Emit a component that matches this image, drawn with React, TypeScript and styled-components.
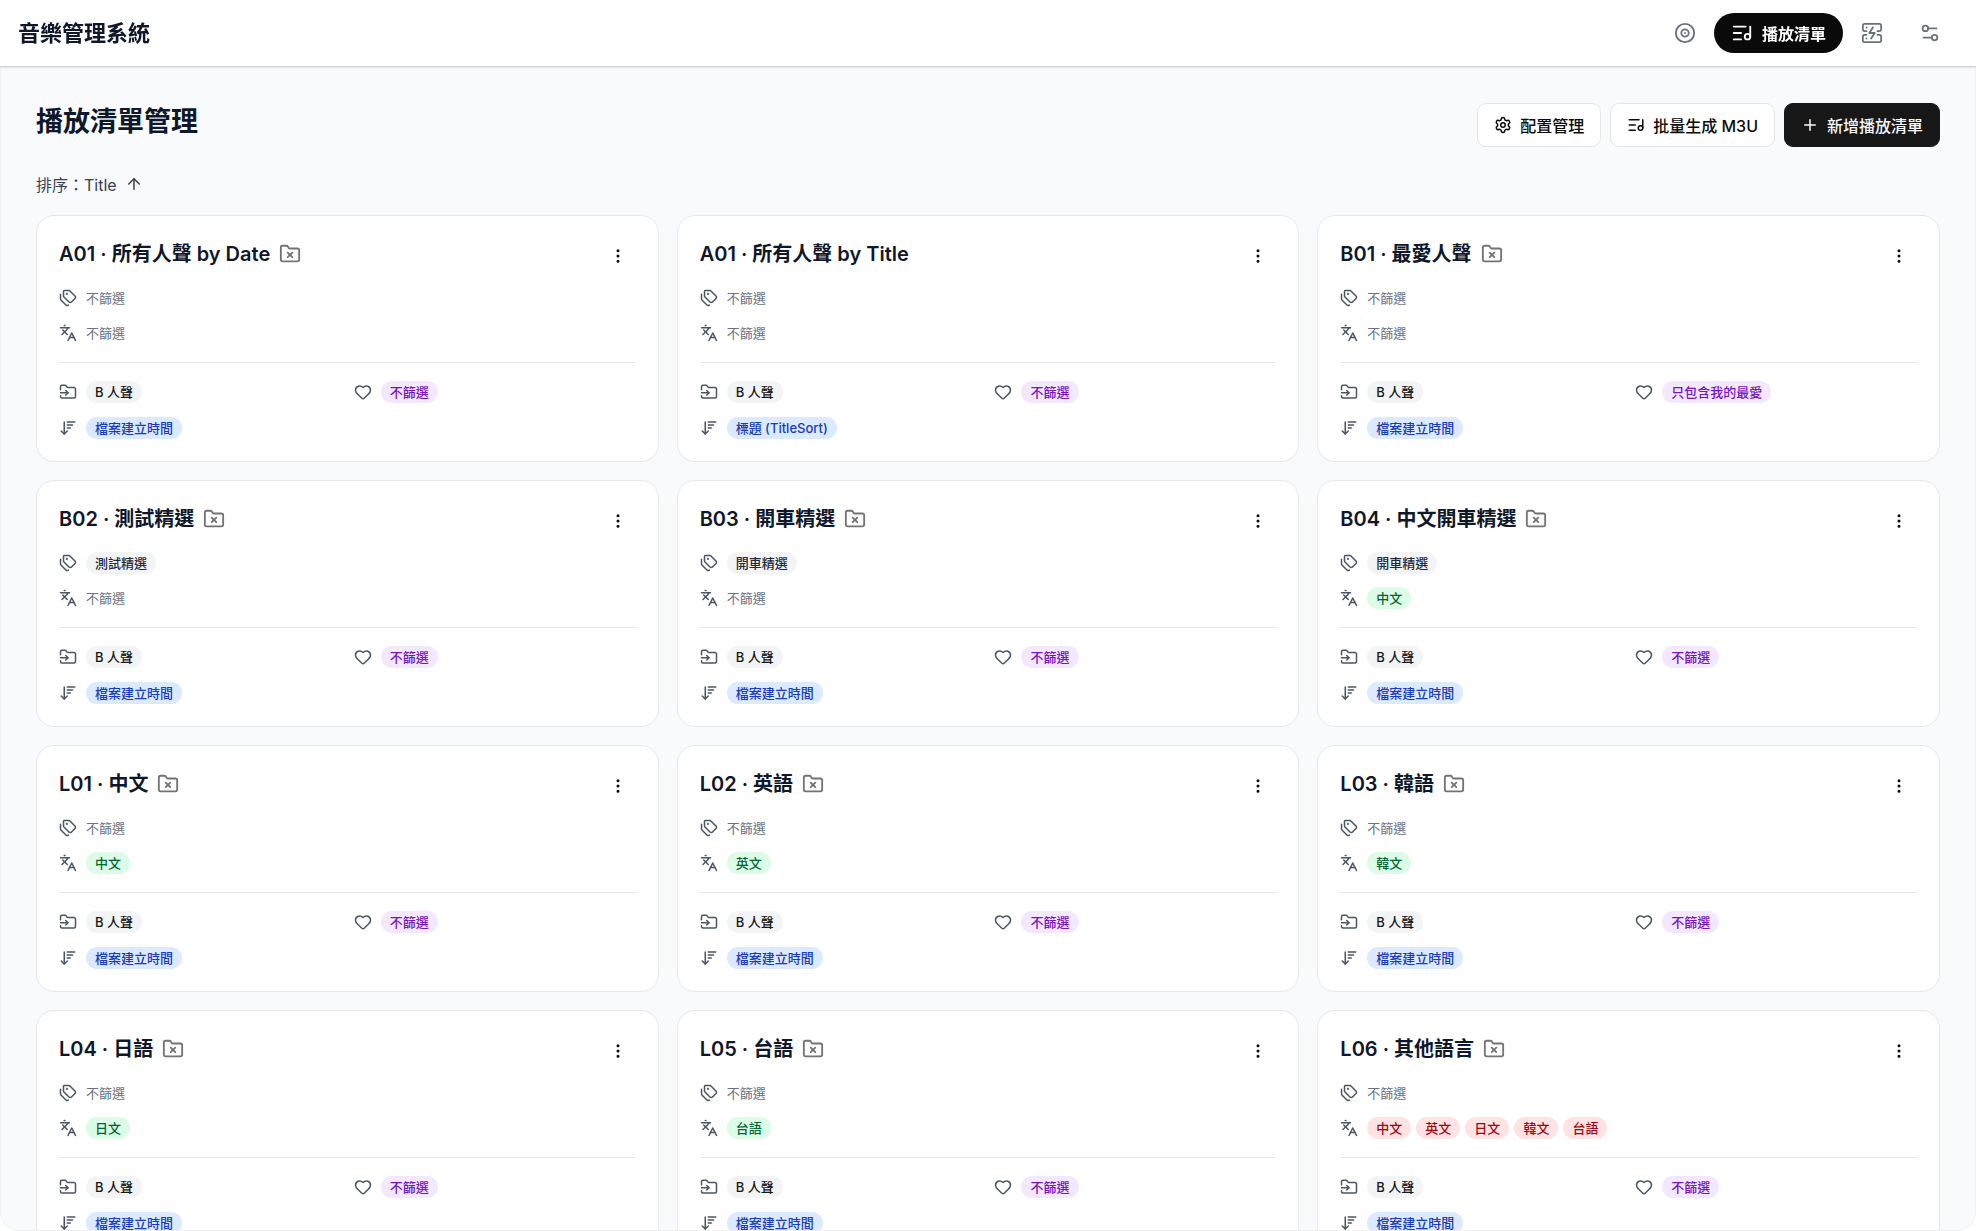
import React from "react";
import styled, { createGlobalStyle, css } from "styled-components";
import {
  ArrowDownWideNarrow,
  ArrowUp,
  Disc2,
  EllipsisVertical,
  FolderInput,
  FolderX,
  Heart,
  Languages,
  ListMusic,
  Plus,
  ServerCrash,
  Settings,
  Settings2,
  Tags,
} from "lucide-react";

const GlobalStyle = createGlobalStyle`
  *, *::before, *::after { box-sizing: border-box; }
  body {
    margin: 0;
    background: #ffffff;
    color: #0f172b;
    font-family: Inter, "Noto Sans CJK TC", sans-serif;
    font-size: 16px;
  }
  button { font: inherit; cursor: pointer; }
  svg { display: block; flex-shrink: 0; }
`;

const Shell = styled.div`
  display: flex;
  flex-direction: column;
  height: 100vh;
  background: #f9fafb;
  overflow: hidden;
`;

const WindowFrame = styled.div`
  position: fixed;
  inset: 0;
  border: 1px solid #f0f0f2;
  border-radius: 20px;
  box-shadow: 0 0 0 20px #ffffff;
  pointer-events: none;
`;

const Header = styled.header`
  display: flex;
  align-items: center;
  justify-content: space-between;
  flex-shrink: 0;
  height: 66px;
  padding: 0 17px 0 18px;
  background: #ffffff;
  box-shadow: 0 1px 3px rgba(0, 0, 0, 0.12), 0 1px 2px rgba(0, 0, 0, 0.12);
  z-index: 1;
`;

const Brand = styled.div`
  font-size: 22px;
  line-height: 32px;
  font-weight: 700;
`;

const Nav = styled.nav`
  display: flex;
`;

const NavItem = styled.a<{ $active?: boolean }>`
  display: flex;
  align-items: center;
  gap: 9px;
  height: 40px;
  padding: 0 18px;
  border-radius: 20px;
  color: #6a7282;
  font-weight: 600;
  text-decoration: none;
  ${(p) =>
    p.$active &&
    css`
      padding: 0 17px;
      background: #0a0a0a;
      color: #ffffff;
    `}
`;

const Main = styled.main`
  flex: 1;
  min-height: 0;
  padding: 37px 36px;
  overflow-y: auto;
  scrollbar-width: none;
`;

const PageHead = styled.div`
  display: flex;
  align-items: flex-start;
  justify-content: space-between;
  height: 44px;
`;

const PageTitle = styled.h1`
  margin: 0;
  font-size: 27px;
  line-height: 38px;
  font-weight: 700;
`;

const Actions = styled.div`
  display: flex;
  gap: 9px;
`;

const ActionButton = styled.button<{ $primary?: boolean }>`
  display: flex;
  align-items: center;
  gap: 8px;
  height: 44px;
  padding: 0 16px;
  border: 1px solid ${(p) => (p.$primary ? "#171717" : "#e5e5e5")};
  border-radius: 9px;
  background: ${(p) => (p.$primary ? "#171717" : "#ffffff")};
  color: ${(p) => (p.$primary ? "#fafafa" : "#0a0a0a")};
  font-weight: 500;
`;

const SortButton = styled.button`
  display: flex;
  align-items: center;
  gap: 8px;
  height: 22px;
  margin: 26px 0 20px;
  padding: 0;
  border: 0;
  background: none;
  color: #364153;
`;

const CardGrid = styled.div`
  display: grid;
  grid-template-columns: repeat(3, minmax(0, 1fr));
  gap: 18px;
`;

const Card = styled.article`
  padding: 22px;
  border: 1px solid #e5e7eb;
  border-radius: 18px;
  background: #ffffff;
`;

const CardHead = styled.div`
  display: flex;
  justify-content: space-between;
  height: 36px;
  margin-bottom: 13px;
`;

const CardTitle = styled.h2`
  display: flex;
  align-items: center;
  gap: 9px;
  height: 32px;
  margin: 0;
  font-size: 20px;
  line-height: 32px;
  font-weight: 600;

  svg { color: #737373; }
`;

const MenuButton = styled.button`
  display: grid;
  place-items: center;
  width: 36px;
  height: 36px;
  padding: 0;
  border: 0;
  border-radius: 9px;
  background: none;
  color: #0a0a0a;
`;

const FilterRows = styled.div`
  display: grid;
  gap: 13px;
  padding-bottom: 18px;
  border-bottom: 1px solid #e5e7eb;
`;

const SettingRows = styled.div`
  display: grid;
  grid-template-columns: repeat(2, minmax(0, 1fr));
  gap: 14px 13px;
  padding-top: 18px;
`;

const Row = styled.div`
  display: flex;
  align-items: center;
  gap: 9px;
  height: 22px;
  color: #4a5565;
`;

const PillList = styled.div`
  display: flex;
  gap: 5px;
`;

const tones = {
  gray: ["#f3f4f6", "#1e2939"],
  neutral: ["#f3f4f6", "#171717"],
  green: ["#dcfce7", "#016630"],
  red: ["#ffe2e2", "#9f0712"],
  purple: ["#f3e8ff", "#7614bd"],
  blue: ["#dbeafe", "#193cb8"],
};
type Tone = keyof typeof tones;

const Pill = styled.span<{ $tone: Tone }>`
  padding: 0 9px;
  border-radius: 11px;
  background: ${(p) => tones[p.$tone][0]};
  color: ${(p) => tones[p.$tone][1]};
  font-size: 13px;
  line-height: 22px;
  font-weight: 500;
  white-space: nowrap;
`;

const Muted = styled.span`
  color: #6a7282;
  font-size: 13px;
  line-height: 22px;
`;

const NONE = "不篩選";

interface Playlist {
  title: string;
  plain?: boolean;
  tags?: string[];
  languages?: string[];
  excluded?: boolean;
  favorite?: string;
  sort?: string;
}

const playlists: Playlist[] = [
  { title: "A01 · 所有人聲 by Date" },
  { title: "A01 · 所有人聲 by Title", plain: true, sort: "標題 (TitleSort)" },
  { title: "B01 · 最愛人聲", favorite: "只包含我的最愛" },
  { title: "B02 · 測試精選", tags: ["測試精選"] },
  { title: "B03 · 開車精選", tags: ["開車精選"] },
  { title: "B04 · 中文開車精選", tags: ["開車精選"], languages: ["中文"] },
  { title: "L01 · 中文", languages: ["中文"] },
  { title: "L02 · 英語", languages: ["英文"] },
  { title: "L03 · 韓語", languages: ["韓文"] },
  { title: "L04 · 日語", languages: ["日文"] },
  { title: "L05 · 台語", languages: ["台語"] },
  {
    title: "L06 · 其他語言",
    languages: ["中文", "英文", "日文", "韓文", "台語"],
    excluded: true,
  },
];

function Values({ items, tone }: { items?: string[]; tone: Tone }) {
  if (!items) return <Muted>{NONE}</Muted>;
  return (
    <PillList>
      {items.map((item) => (
        <Pill key={item} $tone={tone}>{item}</Pill>
      ))}
    </PillList>
  );
}

function PlaylistCard({ item }: { item: Playlist }) {
  return (
    <Card>
      <CardHead>
        <CardTitle>
          {item.title}
          {!item.plain && <FolderX size={22} />}
        </CardTitle>
        <MenuButton type="button" aria-label="更多">
          <EllipsisVertical size={18} />
        </MenuButton>
      </CardHead>
      <FilterRows>
        <Row>
          <Tags size={18} />
          <Values items={item.tags} tone="gray" />
        </Row>
        <Row>
          <Languages size={18} />
          <Values items={item.languages} tone={item.excluded ? "red" : "green"} />
        </Row>
      </FilterRows>
      <SettingRows>
        <Row>
          <FolderInput size={18} />
          <Pill $tone="neutral">B 人聲</Pill>
        </Row>
        <Row>
          <Heart size={18} />
          <Pill $tone="purple">{item.favorite ?? NONE}</Pill>
        </Row>
        <Row>
          <ArrowDownWideNarrow size={18} />
          <Pill $tone="blue">{item.sort ?? "檔案建立時間"}</Pill>
        </Row>
      </SettingRows>
    </Card>
  );
}

export default function App() {
  return (
    <Shell lang="zh-Hant">
      <GlobalStyle />
      <Header>
        <Brand>音樂管理系統</Brand>
        <Nav>
          <NavItem href="#albums" aria-label="專輯"><Disc2 size={22} /></NavItem>
          <NavItem href="#playlists" $active aria-current="page">
            <ListMusic size={22} />
            播放清單
          </NavItem>
          <NavItem href="#server" aria-label="伺服器"><ServerCrash size={22} /></NavItem>
          <NavItem href="#settings" aria-label="設定"><Settings2 size={22} /></NavItem>
        </Nav>
      </Header>
      <Main>
        <PageHead>
          <PageTitle>播放清單管理</PageTitle>
          <Actions>
            <ActionButton type="button"><Settings size={18} />配置管理</ActionButton>
            <ActionButton type="button"><ListMusic size={18} />批量生成 M3U</ActionButton>
            <ActionButton type="button" $primary><Plus size={18} />新增播放清單</ActionButton>
          </Actions>
        </PageHead>
        <SortButton type="button">
          排序：Title
          <ArrowUp size={18} />
        </SortButton>
        <CardGrid>
          {playlists.map((item) => (
            <PlaylistCard key={item.title} item={item} />
          ))}
        </CardGrid>
      </Main>
      <WindowFrame />
    </Shell>
  );
}
